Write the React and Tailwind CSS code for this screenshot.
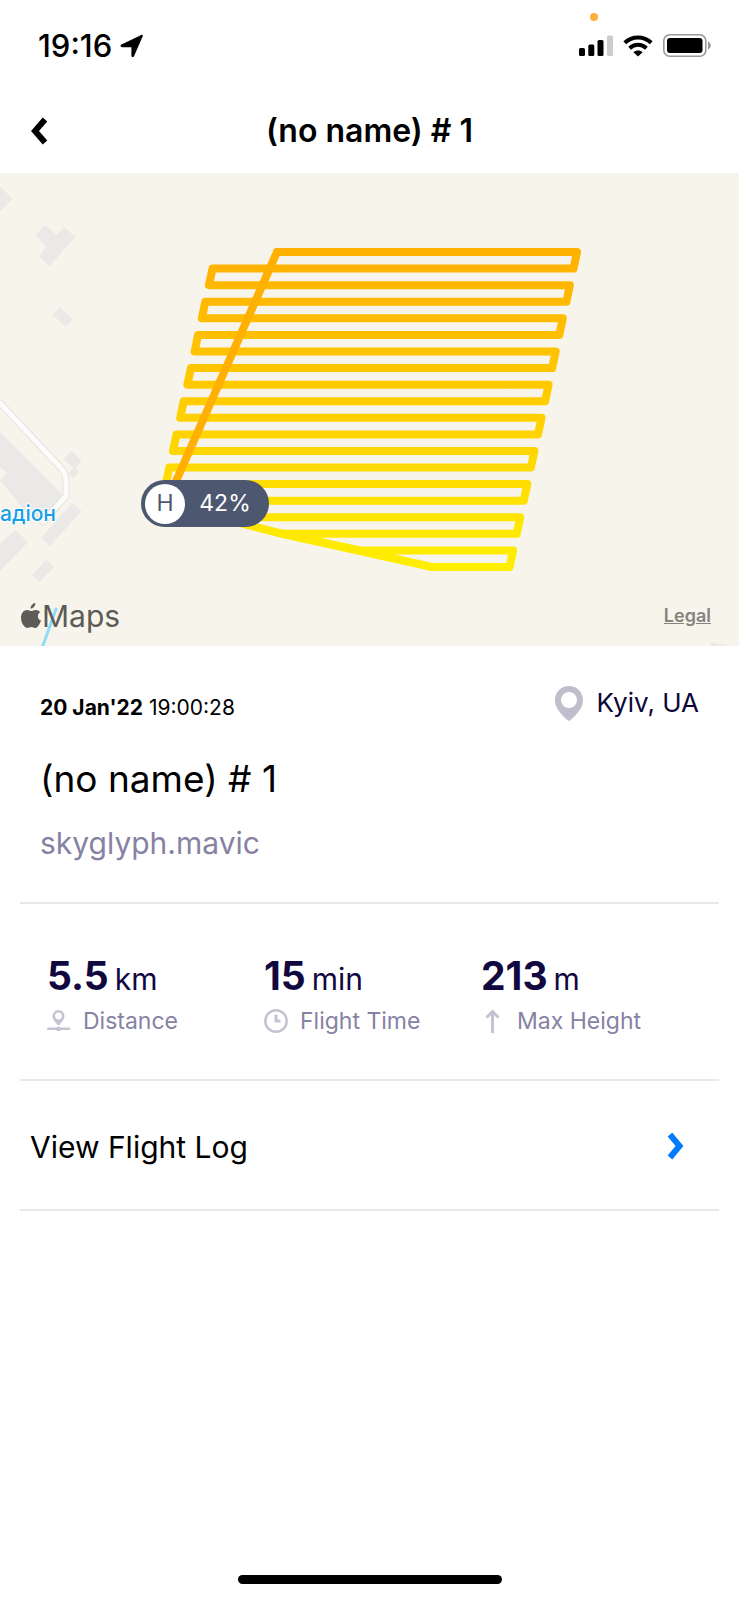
import { useState } from 'react';

// --- Flight data ---
const flight = {
  name: '(no name) # 1',
  date: "20 Jan'22",
  time: '19:00:28',
  place: 'Kyiv, UA',
  aircraft: 'skyglyph.mavic',
  battery: '42%',
};

// Survey grid: parallel rows from north to south, joined at alternating ends
const buildRoute = () => {
  const points = [];
  for (let row = 0; row < 20; row++) {
    const pair = Math.floor(row / 2);
    const y = 79 + row * 16.58;
    const right = (row % 2 ? 573.5 : 577) - pair * 7.1;
    let left = row % 2 ? 212.5 - pair * 7.2 : 216.2 - pair * 7.2;
    if (row === 0) left = 277;
    if (row === 17) left = 283;
    if (row === 18) left = 360;
    if (row === 19) left = 432;
    if (row % 2) {
      points.push([right, y], [left, y]);
    } else {
      points.push([left, y], [right, y]);
    }
  }
  // Way back to the home point
  points.push([360, 378], [283, 361], [165, 331]);
  return points.map((p) => p.join(',')).join(' ');
};

// --- Icon components ---
const LocationArrowIcon = () => (
  <svg width="24" height="24" viewBox="0 0 24 24" aria-hidden="true">
    <path d="M1.500 10.500 21.300.9c1-.5 1.900.4 1.400 1.400l-8.800 20.100c-.5 1.100-2.500.9-2.500-.6v-8.600H2.300c-1.900 0-2.400-1.900-.8-2.700z" />
  </svg>
);

const SignalIcon = () => (
  <svg width="34" height="22" viewBox="0 0 34 22" aria-hidden="true">
    <rect x="0" y="13" width="6" height="8" rx="1.500" />
    <rect x="9.300" y="9.500" width="6" height="11.500" rx="1.500" />
    <rect x="18.500" y="5" width="6" height="16" rx="1.500" />
    <rect x="28" y="0.500" width="6" height="20.500" rx="1.500" fill="#cccccc" />
  </svg>
);

const WifiIcon = () => (
  <svg width="30" height="22" viewBox="0 0 30 22" aria-hidden="true">
    <g fill="none" stroke="#000" strokeWidth="4">
      <path d="M1.800 7.800C9.200.6 20.800.6 28.200 7.800" />
      <path d="M6.600 13.200C11.400 8.600 18.600 8.600 23.400 13.200" />
    </g>
    <path d="M15 21.500 10.400 17.200C13 14.900 17 14.900 19.600 17.200z" />
  </svg>
);

const BatteryIcon = () => (
  <svg width="48" height="23" viewBox="0 0 48 23" aria-hidden="true">
    <rect x="0.800" y="0.800" width="42" height="21.400" rx="6" fill="none" stroke="#999" strokeWidth="1.600" />
    <rect x="4" y="4" width="35.500" height="15" rx="3" />
    <path d="M45 7.500c3.700 1.400 3.700 6.600 0 8z" fill="#999" />
  </svg>
);

const BackIcon = () => (
  <svg width="18" height="28" viewBox="0 0 18 28" fill="none" stroke="currentColor" strokeWidth="6" aria-hidden="true">
    <path d="M15 2.500 5 14l10 11.500" />
  </svg>
);

const ForwardIcon = () => (
  <svg width="18" height="28" viewBox="0 0 18 28" fill="none" stroke="#007aff" strokeWidth="6" aria-hidden="true">
    <path d="M3 1.500 12.500 13 3 24.500" />
  </svg>
);

const AppleIcon = () => (
  <svg width="20" height="26" viewBox="0 0 20 26" fill="#5c5b57" aria-hidden="true">
    <path d="M14.300 0c.3 2.800-2.100 5.500-4.700 5.500C9.300 2.900 11.800.3 14.300 0z" />
    <path d="M19.200 9c-3.300 2-3 7.200.8 8.600-.9 2.900-3.100 7.400-5.700 7.400-1.500 0-2.200-.9-4-.9-1.900 0-2.600.9-4 .9C3.400 25 0 20 0 14.800 0 9.700 3.200 7 6.100 7c1.800 0 3.200 1.100 4.200 1.100S12.900 6.900 15 6.900c1.500 0 3.200.7 4.200 2.100z" />
  </svg>
);

const PlaceIcon = () => (
  <svg width="28" height="35" viewBox="0 0 28 35" aria-hidden="true">
    <path fill="#c0bdcd" fillRule="evenodd" d="M14 0C6.300 0 0 6 0 14c0 6 3 10 6 13.500 2.500 3 5 5.500 8 7.500 3-2 5.500-4.500 8-7.500 3-3.500 6-7.500 6-13.500C28 6 21.700 0 14 0zm0 6a8 8 0 1 1 0 16 8 8 0 0 1 0-16z" />
  </svg>
);

const DistanceIcon = () => (
  <svg width="24" height="24" viewBox="0 0 24 24" fill="#c5c2d1" aria-hidden="true">
    <path fillRule="evenodd" d="M11.500 1a6 6 0 0 0-6 6c0 3.500 3.500 6.500 5 9h2c1.500-2.500 5-5.500 5-9a6 6 0 0 0-6-6zm0 2.600a3.400 3.400 0 1 1 0 6.800 3.400 3.400 0 0 1 0-6.800z" />
    <path d="M1.200 18.600h8.100c1-1.300 3.400-1.300 4.400 0h8.300a1.200 1.200 0 0 1 0 2.400h-8.300c-1 1.600-3.400 1.600-4.400 0H1.200a1.200 1.200 0 0 1 0-2.400z" />
  </svg>
);

const ClockIcon = () => (
  <svg width="24" height="24" viewBox="0 0 24 24" fill="none" stroke="#c5c2d1" strokeWidth="2.500" aria-hidden="true">
    <circle cx="12" cy="12" r="10.700" />
    <path d="M12 5.500V12h4.500" strokeWidth="3" />
  </svg>
);

const HeightIcon = () => (
  <svg width="24" height="24" viewBox="0 0 24 24" fill="none" stroke="#c5c2d1" strokeWidth="3" aria-hidden="true">
    <path d="M11.500 24V2.500M5.500 8.500l6-6 6 6" />
  </svg>
);

const stats = [
  { value: '5.5', unit: 'km', label: 'Distance', Icon: DistanceIcon },
  { value: '15', unit: 'min', label: 'Flight Time', Icon: ClockIcon },
  { value: '213', unit: 'm', label: 'Max Height', Icon: HeightIcon },
];

const StatusBar = () => (
  <div className="relative flex h-[90px] items-center justify-between pl-[38px] pr-7 pt-px">
    <div className="flex items-center gap-2 text-[31px] font-medium leading-9">
      <span>19:16</span>
      <LocationArrowIcon />
    </div>
    <div className="flex items-center gap-[10px]">
      <SignalIcon />
      <WifiIcon />
      <BatteryIcon />
    </div>
    <span className="absolute right-[141px] top-[13px] size-2 rounded-full bg-[#ffb03a]" />
  </div>
);

const FlightMap = () => (
  <section className="relative h-[473px] overflow-hidden bg-[#f7f4eb]" aria-label="Flight map">
    <svg className="h-full w-full" viewBox="0 0 739 473" preserveAspectRatio="xMinYMin slice">
      <defs>
        <linearGradient id="battery" gradientUnits="userSpaceOnUse" x1="0" y1="79" x2="0" y2="394">
          <stop offset="0" stopColor="#ffb100" />
          <stop offset="0.260" stopColor="#ffbf00" />
          <stop offset="0.480" stopColor="#ffcd00" />
          <stop offset="0.700" stopColor="#ffdb00" />
          <stop offset="0.880" stopColor="#ffe800" />
          <stop offset="1" stopColor="#ffee00" />
        </linearGradient>
      </defs>

      {/* Buildings */}
      <g fill="#eae9e7">
        <path d="M0 13 12.500 26 0 39z" />
        <path d="M45 52 56.500 62 64.500 54.500 75 64 49.500 93 39 83 46.500 74 35.500 62z" />
        <path d="M60 134 73 146 66 154 53 142z" />
        <path d="M0 259 64 323 42 352 25 338 0 307 7 300 0 294z" />
        <path d="M71 277.500 82 288 76 295 79 299 73.500 305.500 69 301 73 295 64 286z" />
        <path d="M72 330 81.500 338 50 373 41 365z" />
        <path d="M15 357 28 369 0 398V371z" />
        <path d="M46 387 54 394 40 409 32 402z" />
        <path d="M711 469 728 473H711z" />
      </g>

      {/* Road and stream */}
      <g fill="none" strokeLinecap="round" strokeLinejoin="round">
        <path d="M0 230 60 294Q66 300 66 308V323L43 349" stroke="#e4e2dc" strokeWidth="7" />
        <path d="M0 230 60 294Q66 300 66 308V323L43 349" stroke="#fcfcfc" strokeWidth="5" />
        <path d="M56 436 41 478" stroke="#8ddcf8" strokeWidth="3" />
      </g>

      <text x="0" y="348" className="font-medium" fontSize="21" fill="#159fe8" stroke="#fff" strokeWidth="2" paintOrder="stroke">
        адіон
      </text>

      {/* Flight route */}
      <g fill="none" strokeWidth="8" strokeLinecap="round" strokeLinejoin="round">
        <polyline points={buildRoute()} stroke="url(#battery)" />
        <path d="M277 79 166 331" stroke="#ffb000" />
      </g>
    </svg>

    {/* Home point */}
    <div className="absolute left-[141px] top-[307px] flex h-[47px] w-32 items-center rounded-full bg-[#4d5870] px-1 text-[23px]">
      <span className="flex size-10 items-center justify-center rounded-full bg-white text-[#4d5870]">H</span>
      <span className="flex-1 text-center text-white">{flight.battery}</span>
    </div>

    <div className="absolute inset-x-0 bottom-0 flex items-center justify-between pb-3 pl-[21px] pr-7">
      <div className="flex items-center gap-px text-[30px] leading-9 text-[#5c5b57]">
        <AppleIcon />
        <span>Maps</span>
      </div>
      <a href="#legal" className="text-lg font-semibold text-[#85837e] underline">Legal</a>
    </div>
  </section>
);

const App = () => {
  const [logOpen, setLogOpen] = useState(false);

  return (
    <div className="flex min-h-screen flex-col bg-white font-['Inter','Liberation_Sans',sans-serif] text-black">
      <StatusBar />

      <header className="grid h-[83px] grid-cols-[64px_1fr_64px] items-center pb-px">
        <button type="button" aria-label="Back" className="pl-[30px]">
          <BackIcon />
        </button>
        <h1 className="text-center text-[32px] font-semibold leading-10">{flight.name}</h1>
      </header>

      <FlightMap />

      <main className="px-5">
        <section className="border-b-2 border-[#e8e8e8] px-5 pb-[41px] pt-[37px]">
          <div className="flex items-center justify-between">
            <p className="pt-[10px] text-[21px] leading-7">
              <b className="font-bold">{flight.date}</b> {flight.time}
            </p>
            <p className="flex items-center gap-[14px] text-[26px] leading-10 text-[#0c0636]">
              <PlaceIcon />
              {flight.place}
            </p>
          </div>
          <h2 className="mt-8 text-[37px] leading-12">{flight.name}</h2>
          <p className="mt-[22px] text-[30px] leading-9 text-[#8682a3]">{flight.aircraft}</p>
        </section>

        <section className="grid grid-cols-[217px_217px_1fr] border-b-2 border-[#e8e8e8] pb-10 pl-[27px] pt-12">
          {stats.map(({ value, unit, label, Icon }) => (
            <div key={label}>
              <p className="flex items-baseline gap-[6px] text-[30px] leading-12 text-[#10083f]">
                <span className="text-[39px] font-bold">{value}</span>
                <span>{unit}</span>
              </p>
              <p className="flex items-center gap-3 text-[23px] leading-9 text-[#8682a3]">
                <Icon />
                {label}
              </p>
            </div>
          ))}
        </section>

        <button
          type="button"
          aria-expanded={logOpen}
          onClick={() => setLogOpen(!logOpen)}
          className="flex h-[130px] w-full items-center justify-between border-b-2 border-[#e8e8e8] pl-[10px] pr-[34px] pt-1 text-[30px]"
        >
          View Flight Log
          <ForwardIcon />
        </button>
      </main>

      <div className="mx-auto mb-4 mt-auto h-[9px] w-[264px] rounded-full bg-black" />
    </div>
  );
};

export default App;
